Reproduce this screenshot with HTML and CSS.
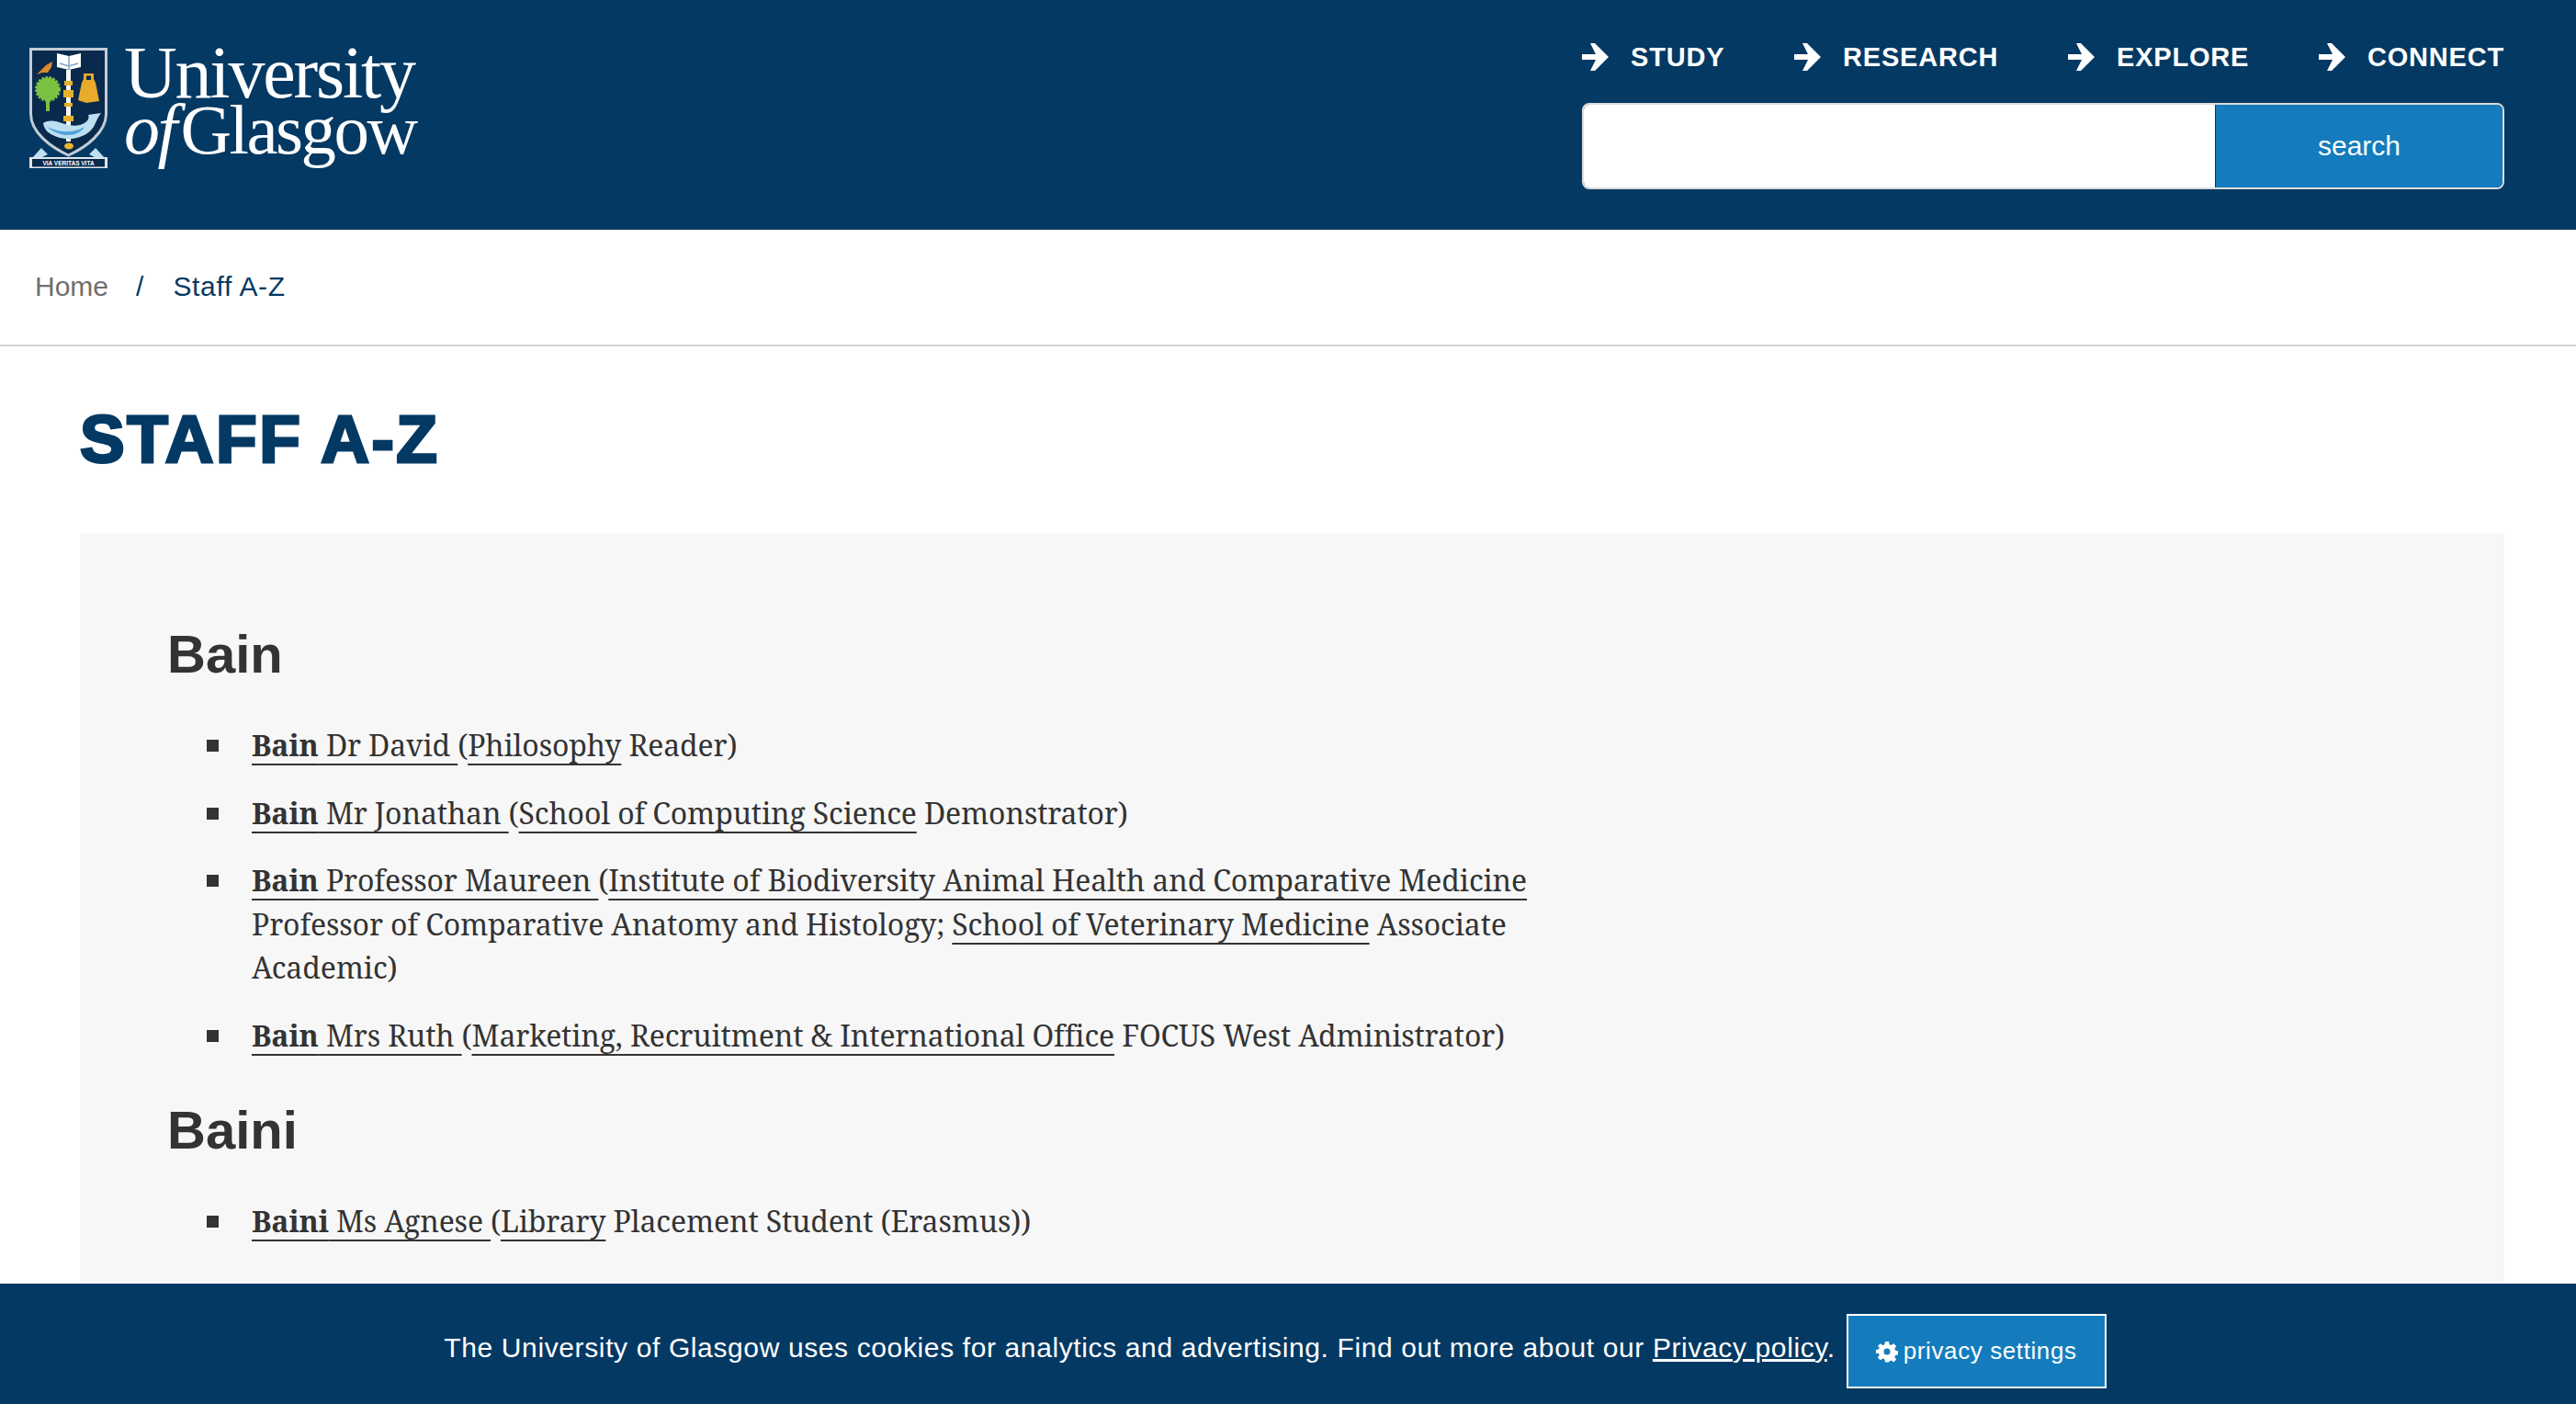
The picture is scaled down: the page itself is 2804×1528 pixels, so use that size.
FILE: index.html
```html
<!DOCTYPE html>
<html lang="en">
<head>
  <meta charset="UTF-8" />
  <title>Staff A-Z</title>
  <link rel="stylesheet" href="styles.css">
</head>
<body>

  <header class="site-header">
    <a class="logo" href="#">
      <svg class="crest" width="85" height="131" viewBox="0 0 85 131">
        <path d="M1.500 1.500H83.500V72C83.500 92 62 108 42.500 117C23 108 1.500 92 1.500 72Z" fill="#0a2a4d" stroke="#c3ccd6" stroke-width="3"/>
        <path d="M30 6L43 9L56 6V21L43 24L30 21Z" fill="#fff"/>
        <path d="M43 9V24M33 17L43 20L53 17" fill="none" stroke="#7fa6c6" stroke-width="1.500"/>
        <rect x="40" y="24" width="5" height="78" fill="#f4f6f0"/>
        <path d="M38 36h9v5h-9zM37 46h11v8h-11zM38 60h9v4h-9zM37 74h11v6h-11z" fill="#e5b02a"/>
        <path d="M8 29L18 19L25 15L24 21L20 27L14 27Z" fill="#d98a2b"/>
        <circle cx="20" cy="45" r="12.500" fill="#7cc242" stroke="#7cc242" stroke-width="3" stroke-dasharray="2.500 1.500"/>
        <rect x="18" y="52" width="4" height="17" fill="#7cc242"/>
        <path d="M59 28H70V34L72 38L76 58L62 60L53 57L57 38L59 34Z" fill="#e8ab2c"/>
        <path d="M62 30.500H67V35H62Z" fill="#0a2a4d"/>
        <path d="M15 82C28 74 40 88 55 84C63 82 66 76 64 73L78 71C74 76 72 82 70 86C62 98 44 102 30 97C22 94 16 90 15 82Z" fill="#bcdff2"/>
        <path d="M19 86C32 92 46 94 60 86C54 97 34 99 19 86Z" fill="#4fa3d8"/>
        <ellipse cx="43" cy="107" rx="5" ry="3.500" fill="#ecb52a"/>
        <path d="M3 120L13 109L20 116L12 120ZM82 120L72 109L65 116L73 120Z" fill="#bcdff2"/>
        <rect x="0" y="119" width="85" height="12" fill="#dfe5ea"/>
        <rect x="3" y="121" width="79" height="8.500" fill="#0a2a4d"/>
        <text class="crest-motto" x="42.500" y="127.500" text-anchor="middle">VIA VERITAS VITA</text>
      </svg>
      <span class="wordmark"><span>University</span><span class="word-two"><i>of</i> Glasgow</span></span>
    </a>
    <div class="header-right">
      <nav class="main-nav">
        <a href="#"><svg width="29" height="30" viewBox="0 0 29 30"><path d="M0 12H15L9 0H14L29 15L14 30H9L15 18H0Z" fill="#fff"/></svg>STUDY</a>
        <a href="#"><svg width="29" height="30" viewBox="0 0 29 30"><path d="M0 12H15L9 0H14L29 15L14 30H9L15 18H0Z" fill="#fff"/></svg>RESEARCH</a>
        <a href="#"><svg width="29" height="30" viewBox="0 0 29 30"><path d="M0 12H15L9 0H14L29 15L14 30H9L15 18H0Z" fill="#fff"/></svg>EXPLORE</a>
        <a href="#"><svg width="29" height="30" viewBox="0 0 29 30"><path d="M0 12H15L9 0H14L29 15L14 30H9L15 18H0Z" fill="#fff"/></svg>CONNECT</a>
      </nav>
      <form class="search">
        <input type="text">
        <button type="button">search</button>
      </form>
    </div>
  </header>

  <div class="breadcrumb">
    <a href="#">Home</a>
    <span class="sep">/</span>
    <span class="current">Staff A-Z</span>
  </div>

  <main class="content">
    <h1>STAFF A-Z</h1>
    <div class="panel">
      <h2>Bain</h2>
      <ul>
        <li><a href="#"><b>Bain</b> Dr David </a>(<a href="#">Philosophy</a> Reader)</li>
        <li><a href="#"><b>Bain</b> Mr Jonathan </a>(<a href="#">School of Computing Science</a> Demonstrator)</li>
        <li><a href="#"><b>Bain</b> Professor Maureen </a>(<a href="#">Institute of Biodiversity Animal Health and Comparative Medicine</a> Professor of Comparative Anatomy and Histology; <a href="#">School of Veterinary Medicine</a> Associate Academic)</li>
        <li><a href="#"><b>Bain</b> Mrs Ruth </a>(<a href="#">Marketing, Recruitment &amp; International Office</a> FOCUS West Administrator)</li>
      </ul>
      <h2>Baini</h2>
      <ul>
        <li><a href="#"><b>Baini</b> Ms Agnese </a>(<a href="#">Library</a> Placement Student (Erasmus))</li>
      </ul>
    </div>
  </main>

  <div class="cookie-bar">
    <p>The University of Glasgow uses cookies for analytics and advertising. Find out more about our <a href="#">Privacy policy</a>.</p>
    <button type="button"><svg width="24" height="24" viewBox="0 0 24 24"><path fill="#fff" fill-rule="evenodd" d="M10 1h4l.6 3.200 2 .8 2.700-1.800 2.800 2.800-1.800 2.700.8 2 3.200.6v4l-3.200.6-.8 2 1.800 2.700-2.800 2.800-2.700-1.800-2 .8L14 23.500h-4l-.6-3.200-2-.8-2.700 1.800-2.800-2.800 1.800-2.700-.8-2L-.3 14v-4l3.200-.6.8-2L1.900 6l2.800-2.800 2.700 1.800 2-.8zM12 8.500a3.500 3.500 0 1 0 0 7 3.500 3.500 0 0 0 0-7z"/></svg>privacy settings</button>
  </div>

</body>
</html>
```

FILE: styles.css
```css
body {
  margin: 0;
  height: 1528px;
  overflow: hidden;
  position: relative;
  font-family: "Liberation Sans", Arial, sans-serif;
  background: #fff;
  color: #333;
}

a {
  color: inherit;
}

.site-header {
  height: 250px;
  background: #043963;
  display: flex;
  justify-content: space-between;
  padding: 0 78px 0 32px;
  color: #fff;
}

.logo {
  display: flex;
  align-items: flex-start;
  gap: 18px;
  padding-top: 52px;
  text-decoration: none;
}

.crest-motto {
  font-family: "Liberation Sans", sans-serif;
  font-size: 6.500px;
  font-weight: 700;
  fill: #fff;
}

.wordmark {
  display: flex;
  flex-direction: column;
  margin-top: -4px;
  font-family: "Liberation Serif", serif;
  font-size: 80px;
  line-height: 62px;
  letter-spacing: -2.200px;
}

.word-two {
  font-size: 77px;
  word-spacing: -11px;
  letter-spacing: -2.500px;
}

.word-two i {
  font-size: 78px;
}

.header-right {
  width: 1004px;
  padding-top: 47px;
}

.main-nav {
  display: flex;
  justify-content: space-between;
  height: 65px;
}

.main-nav a {
  display: flex;
  align-items: center;
  gap: 24px;
  height: 30px;
  font-size: 29px;
  font-weight: 700;
  letter-spacing: 0.800px;
  text-decoration: none;
}

.search {
  display: flex;
  height: 94px;
  box-sizing: border-box;
  border: 2px solid #dcdcdc;
  border-radius: 8px;
  overflow: hidden;
}

.search input {
  flex: 1;
  min-width: 0;
  border: 0;
  background: #fff;
}

.search button {
  width: 313px;
  border: 0;
  border-left: 1px solid #043963;
  background: #147cbd;
  color: #fff;
  font-family: inherit;
  font-size: 30px;
}

.breadcrumb {
  height: 127px;
  box-sizing: border-box;
  display: flex;
  align-items: center;
  padding-left: 38px;
  padding-bottom: 2px;
  border-bottom: 2px solid #d2d2d2;
  font-size: 30px;
  color: #6f6f6f;
}

.breadcrumb a {
  text-decoration: none;
}

.sep {
  margin: 0 30px;
  color: #043963;
}

.current {
  margin-left: 2px;
  letter-spacing: 0.700px;
  color: #043963;
}

.content {
  padding: 0 78px 0 87px;
}

h1 {
  margin: 0;
  height: 204px;
  box-sizing: border-box;
  padding-top: 60px;
  font-size: 73px;
  line-height: 82px;
  font-weight: 700;
  color: #043963;
  letter-spacing: 2.500px;
  -webkit-text-stroke: 3px #043963;
}

.panel {
  background: #f7f7f7;
  padding: 90px 95px 0;
  height: 900px;
  box-sizing: border-box;
}

h2 {
  margin: 0 0 34px;
  font-size: 58px;
  line-height: 82px;
  font-weight: 700;
  color: #333;
}

.panel ul {
  list-style: none;
  margin: 0 0 39px;
  padding: 0 0 0 92px;
  width: 1500px;
  box-sizing: border-box;
  font-family: "Noto Serif", "DejaVu Serif", "Liberation Serif", serif;
  font-size: 32px;
  line-height: 47.500px;
  letter-spacing: -0.150px;
}

.panel ul a {
  text-decoration-thickness: 2px;
  text-underline-offset: 8px;
  text-decoration-skip-ink: none;
}

.panel li {
  position: relative;
  margin-bottom: 26px;
}

.panel li::before {
  content: "";
  position: absolute;
  left: -49px;
  top: 18px;
  width: 13px;
  height: 13px;
  background: #333;
}

.cookie-bar {
  position: absolute;
  left: 0;
  right: 0;
  bottom: 0;
  height: 131px;
  box-sizing: border-box;
  padding: 8px 28px 0 0;
  background: #043963;
  color: #fff;
  display: flex;
  justify-content: center;
  align-items: center;
  gap: 12px;
  font-size: 30px;
  letter-spacing: 0.620px;
}

.cookie-bar p {
  margin: 0;
}

.cookie-bar button {
  display: flex;
  align-items: center;
  justify-content: center;
  gap: 6px;
  width: 283px;
  height: 81px;
  margin-top: 8px;
  padding: 0;
  background: #147cbd;
  border: 2px solid #fff;
  color: #fff;
  font-family: inherit;
  font-size: 26px;
  letter-spacing: 0.600px;
}
```
